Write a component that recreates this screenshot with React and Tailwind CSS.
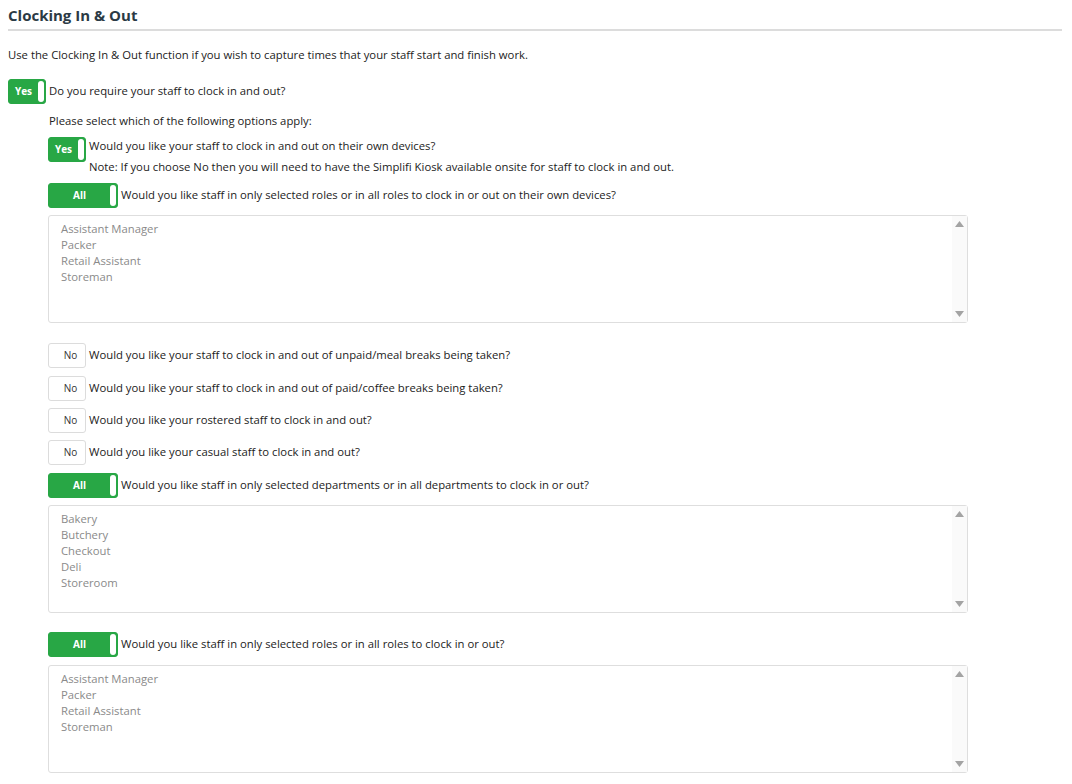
import { useState } from 'react';

const roles = ['Assistant Manager', 'Packer', 'Retail Assistant', 'Storeman'];
const departments = ['Bakery', 'Butchery', 'Checkout', 'Deli', 'Storeroom'];

function Toggle({ on, label, wide }) {
  const width = wide ? 'w-[70px]' : 'w-[38px]';
  if (on) {
    return (
      <div className={`${width} h-[25px] shrink-0 flex rounded-[3px] border border-[#28a745] bg-[#28a745]`}>
        <span className="flex-1 flex items-center justify-center text-[10px] font-bold text-white">{label}</span>
        <span className="w-[6px] my-[1px] mr-[1px] bg-white rounded-[3px]" />
      </div>
    );
  }
  return (
    <div className={`${width} h-[25px] shrink-0 flex rounded-[3px] border border-[#dcdcdc] bg-white`}>
      <span className="w-[7px]" />
      <span className="flex-1 flex items-center justify-center text-[10px] text-[#333]">{label}</span>
    </div>
  );
}

function Row({ on, label, wide, top = 'pt-[4px]', children }) {
  return (
    <div className="flex items-start gap-[3px]">
      <Toggle on={on} label={label} wide={wide} />
      <div className={`${top} leading-[16px]`}>{children}</div>
    </div>
  );
}

function ListBox({ items }) {
  return (
    <div className="w-[920px] h-[108px] flex border border-[#dedede] rounded-[3px] bg-white">
      <div className="flex-1 pl-[12px] pt-[5px] text-[#8a8a8a] leading-[16px]">
        {items.map((item) => (
          <div key={item}>{item}</div>
        ))}
      </div>
      <div className="w-[15px] flex flex-col justify-between items-center py-[5px] bg-[#fafafa]">
        <svg width="9" height="6" viewBox="0 0 9 6"><path d="M4.5 0L9 6H0z" fill="#a3a3a3" /></svg>
        <svg width="9" height="6" viewBox="0 0 9 6"><path d="M0 0h9L4.5 6z" fill="#a3a3a3" /></svg>
      </div>
    </div>
  );
}

export default function App() {
  const [enabled] = useState(true);

  return (
    <div className="w-[1072px] h-[784px] overflow-hidden bg-white px-[8px] text-[11.3px] text-[#222] font-['Open_Sans',sans-serif]">
      <h1 className="pt-[5px] pb-[4px] leading-[20px] text-[15px] font-bold text-[#2b3a45] border-b-2 border-[#dcdcdc] w-[1054px]">
        Clocking In &amp; Out
      </h1>
      <p className="mt-[16px] leading-[16px]">
        Use the Clocking In &amp; Out function if you wish to capture times that your staff start and finish work.
      </p>

      <div className="mt-[16px]">
        <Row on={enabled} label="Yes">Do you require your staff to clock in and out?</Row>
      </div>

      <div className="pl-[40px] mt-[9px]">
        <p className="leading-[16px] pl-[1px]">Please select which of the following options apply:</p>

        <div className="mt-[8px]">
          <Row on label="Yes" top="pt-[1px]">
            <div>Would you like your staff to clock in and out on their own devices?</div>
            <div className="mt-[5px]">Note: If you choose No then you will need to have the Simplifi Kiosk available onsite for staff to clock in and out.</div>
          </Row>
        </div>

        <div className="mt-[8px]">
          <Row on wide label="All">Would you like staff in only selected roles or in all roles to clock in or out on their own devices?</Row>
        </div>
        <div className="mt-[7px]">
          <ListBox items={roles} />
        </div>

        <div className="mt-[20px] flex flex-col">
          <Row label="No">Would you like your staff to clock in and out of unpaid/meal breaks being taken?</Row>
          <div className="mt-[8px]">
            <Row label="No">Would you like your staff to clock in and out of paid/coffee breaks being taken?</Row>
          </div>
          <div className="mt-[7px]">
            <Row label="No">Would you like your rostered staff to clock in and out?</Row>
          </div>
          <div className="mt-[7px]">
            <Row label="No">Would you like your casual staff to clock in and out?</Row>
          </div>
          <div className="mt-[8px]">
            <Row on wide label="All">Would you like staff in only selected departments or in all departments to clock in or out?</Row>
          </div>
        </div>
        <div className="mt-[7px]">
          <ListBox items={departments} />
        </div>

        <div className="mt-[19px]">
          <Row on wide label="All">Would you like staff in only selected roles or in all roles to clock in or out?</Row>
        </div>
        <div className="mt-[8px]">
          <ListBox items={roles} />
        </div>
      </div>
    </div>
  );
}
